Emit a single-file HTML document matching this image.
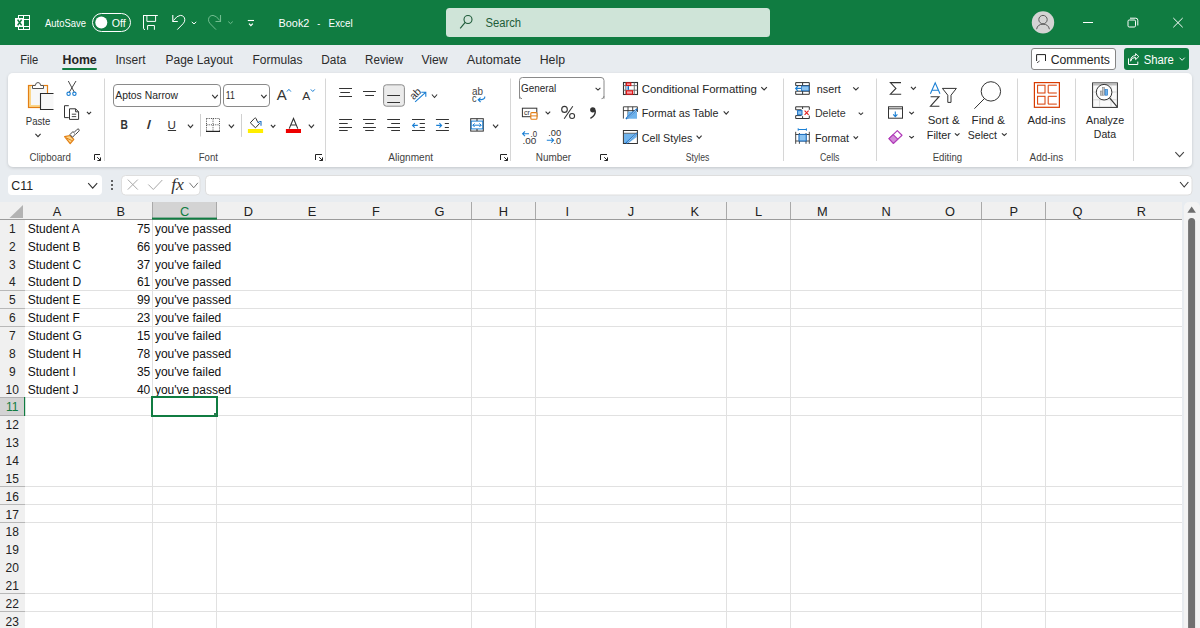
<!DOCTYPE html>
<html><head><meta charset="utf-8"><title>Book2 - Excel</title>
<style>
html,body{margin:0;padding:0;width:1200px;height:628px;overflow:hidden;background:#e8ecf0}
svg{display:block}
text{font-family:"Liberation Sans",sans-serif}
</style></head><body>
<svg width="1200" height="628" viewBox="0 0 1200 628">
<rect x="0" y="0" width="1200" height="628" fill="#e8ecf0"/>
<rect x="0" y="0" width="1200" height="45" fill="#107c41"/>
<rect x="18" y="15" width="12" height="15" fill="#fff"/>
<g fill="#107c41"><rect x="19" y="16" width="4" height="2"/><rect x="24" y="16" width="5" height="3"/><rect x="24" y="20" width="5" height="6"/><rect x="19" y="27" width="4" height="2"/><rect x="24" y="27" width="5" height="2"/></g>
<rect x="15" y="18" width="8" height="9" fill="#fff"/>
<path d="M17.6 19.6 L21.6 25.4 M21.6 19.6 L17.6 25.4" stroke="#107c41" stroke-width="1.6"/>
<text x="45" y="27" font-size="10.5" fill="#fff" textLength="41" lengthAdjust="spacingAndGlyphs" >AutoSave</text>
<rect x="92.5" y="13.5" width="38" height="18" rx="9" fill="none" stroke="#fff" stroke-width="1"/>
<circle cx="101.3" cy="22.6" r="6" fill="#fff"/>
<text x="111.8" y="27" font-size="10.5" fill="#fff" textLength="14" lengthAdjust="spacingAndGlyphs" >Off</text>
<path d="M143 15.5 H157.8 M143.5 15.5 V28.2 Q143.5 29.6 145 29.6" fill="none" stroke="#fff" stroke-width="1"/>
<path d="M146.9 15.5 V21.4 H155.6 V15.5 M147.6 29.8 V25.5 H154.4 V29.8" fill="none" stroke="#fff" stroke-width="1"/>
<path d="M173.4 20.6 Q177 15.5 180.3 15.4 Q184.6 15.5 184.8 19.8 Q184.9 21.8 183 23.8 L177.3 29.6" fill="none" stroke="#fff" stroke-width="1"/>
<path d="M172.8 15 V21.5 H177.8" fill="none" stroke="#fff" stroke-width="1.1"/>
<path d="M191.75 21.9 L194 23.9 L196.25 21.9" fill="none" stroke="#fff" stroke-width="1"/>
<path d="M219.9 20.6 Q216.3 15.5 213 15.4 Q208.7 15.5 208.5 19.8 Q208.4 21.8 210.3 23.8 L216 29.6" fill="none" stroke="#72bd90" stroke-width="1"/>
<path d="M220.5 15 V21.5 H215.5" fill="none" stroke="#72bd90" stroke-width="1.1"/>
<path d="M228.25 21.6 L230.5 23.6 L232.75 21.6" fill="none" stroke="#72bd90" stroke-width="1"/>
<line x1="247.8" y1="20.5" x2="254" y2="20.5" stroke="#fff" stroke-width="1.1"/>
<path d="M249 23.6 L250.9 25.6 L252.8 23.6" fill="none" stroke="#fff" stroke-width="1.3"/>
<text x="278.6" y="27" font-size="11" fill="#fff" textLength="30.8" lengthAdjust="spacingAndGlyphs" >Book2</text>
<text x="317.3" y="27" font-size="11" fill="#fff" textLength="3" lengthAdjust="spacingAndGlyphs" >-</text>
<text x="328.6" y="27" font-size="11" fill="#fff" textLength="24.1" lengthAdjust="spacingAndGlyphs" >Excel</text>
<rect x="446" y="8" width="324" height="29" rx="3.5" fill="#cfe4d8"/>
<circle cx="468" cy="19.5" r="4" fill="none" stroke="#1d5a38" stroke-width="1.1"/>
<line x1="465.2" y1="22.3" x2="460.2" y2="28.3" stroke="#1d5a38" stroke-width="1.1"/>
<text x="485.5" y="27" font-size="12" fill="#1e5c38" textLength="35.6" lengthAdjust="spacingAndGlyphs" >Search</text>
<circle cx="1043" cy="22.4" r="11.2" fill="#d4d4d4"/>
<circle cx="1043" cy="19.6" r="4.2" fill="none" stroke="#5c5c5c" stroke-width="1"/>
<path d="M1036.6 29.2 Q1037.5 24.2 1043 24.2 Q1048.5 24.2 1049.4 29.2" fill="none" stroke="#5c5c5c" stroke-width="1"/>
<line x1="1083" y1="22.5" x2="1093" y2="22.5" stroke="#fff" stroke-width="1"/>
<rect x="1128" y="20" width="7.5" height="7" rx="1.2" fill="none" stroke="#fff" stroke-width="1"/>
<path d="M1130 18.2 H1135.8 Q1137.8 18.2 1137.8 20.2 V25.5" fill="none" stroke="#fff" stroke-width="1"/>
<path d="M1173.3 18 L1182.7 27.3 M1182.7 18 L1173.3 27.3" stroke="#fff" stroke-width="1"/>
<text x="20.3" y="63.8" font-size="12" fill="#2b2b2b" textLength="18" lengthAdjust="spacingAndGlyphs" >File</text>
<text x="62.5" y="63.8" font-size="12" fill="#242424" textLength="34.2" lengthAdjust="spacingAndGlyphs" font-weight="bold" >Home</text>
<text x="115.5" y="63.8" font-size="12" fill="#2b2b2b" textLength="30" lengthAdjust="spacingAndGlyphs" >Insert</text>
<text x="165.5" y="63.8" font-size="12" fill="#2b2b2b" textLength="67.3" lengthAdjust="spacingAndGlyphs" >Page Layout</text>
<text x="252.5" y="63.8" font-size="12" fill="#2b2b2b" textLength="50" lengthAdjust="spacingAndGlyphs" >Formulas</text>
<text x="321.3" y="63.8" font-size="12" fill="#2b2b2b" textLength="25" lengthAdjust="spacingAndGlyphs" >Data</text>
<text x="365.1" y="63.8" font-size="12" fill="#2b2b2b" textLength="38" lengthAdjust="spacingAndGlyphs" >Review</text>
<text x="421.4" y="63.8" font-size="12" fill="#2b2b2b" textLength="26.2" lengthAdjust="spacingAndGlyphs" >View</text>
<text x="466.7" y="63.8" font-size="12" fill="#2b2b2b" textLength="54.3" lengthAdjust="spacingAndGlyphs" >Automate</text>
<text x="539.7" y="63.8" font-size="12" fill="#2b2b2b" textLength="25.3" lengthAdjust="spacingAndGlyphs" >Help</text>
<rect x="62" y="68" width="35" height="2" rx="1" fill="#107c41"/>
<rect x="1031.5" y="48.5" width="84" height="21" rx="2.5" fill="#fff" stroke="#858585" stroke-width="1"/>
<path d="M1036.6 61 V54.6 H1045.5 V61" fill="none" stroke="#222" stroke-width="1"/>
<path d="M1037 62.8 L1039.6 61" fill="none" stroke="#555" stroke-width="1"/>
<text x="1050.7" y="63.8" font-size="12" fill="#242424" textLength="59.3" lengthAdjust="spacingAndGlyphs" >Comments</text>
<rect x="1124" y="48" width="65" height="22" rx="3" fill="#107c41"/>
<path d="M1128.5 58.4 V64.5 H1137.8 V61.6" fill="none" stroke="#fff" stroke-width="1"/>
<path d="M1130.6 61.2 Q1131.2 57.4 1135.6 57.4 V59.6 L1138.8 56.6 L1135.6 53.6 V55.6 Q1130.6 55.8 1130.6 61.2 Z" fill="none" stroke="#fff" stroke-width="1" stroke-linejoin="round"/>
<text x="1143.7" y="63.8" font-size="12" fill="#fff" textLength="30" lengthAdjust="spacingAndGlyphs" >Share</text>
<path d="M1179.5 57.7 L1182.1 60.3 L1184.6999999999998 57.7" fill="none" stroke="#fff" stroke-width="1"/>
<defs><filter id="sh" x="-5%" y="-20%" width="110%" height="150%"><feDropShadow dx="0" dy="1" stdDeviation="1.4" flood-color="#000" flood-opacity="0.16"/></filter></defs>
<rect x="8" y="73" width="1184" height="94" rx="5" fill="#ffffff" filter="url(#sh)"/>
<line x1="104.5" y1="78.5" x2="104.5" y2="161" stroke="#d6d6d6" stroke-width="1"/>
<line x1="325.5" y1="78.5" x2="325.5" y2="161" stroke="#d6d6d6" stroke-width="1"/>
<line x1="510.5" y1="78.5" x2="510.5" y2="161" stroke="#d6d6d6" stroke-width="1"/>
<line x1="783.5" y1="78.5" x2="783.5" y2="161" stroke="#d6d6d6" stroke-width="1"/>
<line x1="876.5" y1="78.5" x2="876.5" y2="161" stroke="#d6d6d6" stroke-width="1"/>
<line x1="1017.5" y1="78.5" x2="1017.5" y2="161" stroke="#d6d6d6" stroke-width="1"/>
<line x1="1075.5" y1="78.5" x2="1075.5" y2="161" stroke="#d6d6d6" stroke-width="1"/>
<line x1="1133.5" y1="78.5" x2="1133.5" y2="161" stroke="#d6d6d6" stroke-width="1"/>
<text x="29.5" y="160.8" font-size="10" fill="#424242" textLength="41.4" lengthAdjust="spacingAndGlyphs" >Clipboard</text>
<text x="198.7" y="160.8" font-size="10" fill="#424242" textLength="19.2" lengthAdjust="spacingAndGlyphs" >Font</text>
<text x="388.3" y="160.8" font-size="10" fill="#424242" textLength="44.8" lengthAdjust="spacingAndGlyphs" >Alignment</text>
<text x="535.8" y="160.8" font-size="10" fill="#424242" textLength="35.4" lengthAdjust="spacingAndGlyphs" >Number</text>
<text x="685.75" y="160.8" font-size="10" fill="#424242" textLength="23.5" lengthAdjust="spacingAndGlyphs" >Styles</text>
<text x="820" y="160.8" font-size="10" fill="#424242" textLength="19.5" lengthAdjust="spacingAndGlyphs" >Cells</text>
<text x="932.7" y="160.8" font-size="10" fill="#424242" textLength="29.4" lengthAdjust="spacingAndGlyphs" >Editing</text>
<text x="1029.5" y="160.8" font-size="10" fill="#424242" textLength="33.8" lengthAdjust="spacingAndGlyphs" >Add-ins</text>
<path d="M94.5 160 V154.5 H100" fill="none" stroke="#222" stroke-width="1"/>
<path d="M97.2 157.2 L100.5 160.5 M100.5 157.4 V160.5 H97.4" fill="none" stroke="#222" stroke-width="1"/>
<path d="M315.5 160 V154.5 H322" fill="none" stroke="#222" stroke-width="1"/>
<path d="M319.2 157.2 L322.5 160.5 M322.5 157.4 V160.5 H319.4" fill="none" stroke="#222" stroke-width="1"/>
<path d="M500.5 160 V154.5 H507" fill="none" stroke="#222" stroke-width="1"/>
<path d="M504.2 157.2 L507.5 160.5 M507.5 157.4 V160.5 H504.4" fill="none" stroke="#222" stroke-width="1"/>
<path d="M600.5 160 V154.5 H607" fill="none" stroke="#222" stroke-width="1"/>
<path d="M604.2 157.2 L607.5 160.5 M607.5 157.4 V160.5 H604.4" fill="none" stroke="#222" stroke-width="1"/>
<path d="M1175.35 152.15 L1179.6 156.65 L1183.85 152.15" fill="none" stroke="#444" stroke-width="1.1"/>
<rect x="8" y="175" width="94" height="20" rx="4" fill="#fff"/>
<text x="11.3" y="189.7" font-size="12" fill="#242424" textLength="21.7" lengthAdjust="spacingAndGlyphs" >C11</text>
<path d="M88.2 183.2 L92.7 188.2 L97.2 183.2" fill="none" stroke="#333" stroke-width="1.1"/>
<circle cx="112" cy="181" r="1" fill="#333"/>
<circle cx="112" cy="185" r="1" fill="#333"/>
<circle cx="112" cy="189" r="1" fill="#333"/>
<rect x="121.5" y="175.5" width="78.5" height="19.5" rx="4" fill="#fff" stroke="#dedede" stroke-width="1"/>
<path d="M127.8 179.6 L137.8 189.6 M137.8 179.6 L127.8 189.6" stroke="#a8a8a8" stroke-width="1"/>
<path d="M148.3 184.5 L153.3 189.5 L162.3 180" fill="none" stroke="#a8a8a8" stroke-width="1"/>
<text x="171.2" y="190" font-size="16.5" fill="#333" textLength="12.8" lengthAdjust="spacingAndGlyphs" font-style="italic" style="font-family:'Liberation Serif'" >fx</text>
<path d="M189.45 182.8 L193.7 187.8 L197.95 182.8" fill="none" stroke="#777" stroke-width="1"/>
<rect x="205.5" y="175.5" width="986.5" height="19.5" rx="4" fill="#fff" stroke="#dedede" stroke-width="1"/>
<path d="M1180.05 182.0 L1184.2 187.0 L1188.3500000000001 182.0" fill="none" stroke="#333" stroke-width="1.1"/>
<rect x="0" y="202" width="1182" height="17" fill="#f0f0f0"/>
<rect x="0" y="219" width="25" height="409" fill="#f0f0f0"/>
<rect x="25" y="220" width="1157" height="408" fill="#ffffff"/>
<rect x="152" y="202" width="65" height="17" fill="#d3d3d3"/>
<rect x="152" y="202" width="1" height="17" fill="#a9a9a9"/>
<rect x="216" y="202" width="1" height="17" fill="#a9a9a9"/>
<rect x="471" y="202" width="1" height="17" fill="#a9a9a9"/>
<rect x="535" y="202" width="1" height="17" fill="#a9a9a9"/>
<rect x="726" y="202" width="1" height="17" fill="#a9a9a9"/>
<rect x="790" y="202" width="1" height="17" fill="#a9a9a9"/>
<rect x="981" y="202" width="1" height="17" fill="#a9a9a9"/>
<rect x="1045" y="202" width="1" height="17" fill="#a9a9a9"/>
<rect x="0" y="219" width="1182" height="1" fill="#9b9b9b"/>
<rect x="152" y="217.6" width="65" height="2" fill="#107c41"/>
<polygon points="23,205 23,218 9.5,218" fill="#b3b3b3"/>
<rect x="152" y="220" width="1" height="408" fill="#e1e1e1"/>
<rect x="471" y="220" width="1" height="408" fill="#e1e1e1"/>
<rect x="535" y="220" width="1" height="408" fill="#e1e1e1"/>
<rect x="726" y="220" width="1" height="408" fill="#e1e1e1"/>
<rect x="790" y="220" width="1" height="408" fill="#e1e1e1"/>
<rect x="981" y="220" width="1" height="408" fill="#e1e1e1"/>
<rect x="1045" y="220" width="1" height="408" fill="#e1e1e1"/>
<rect x="216" y="397" width="1" height="231" fill="#e1e1e1"/>
<rect x="25" y="290" width="1157" height="1" fill="#e1e1e1"/>
<rect x="0" y="290" width="25" height="1" fill="#b8b8b8"/>
<rect x="25" y="308" width="1157" height="1" fill="#e1e1e1"/>
<rect x="0" y="308" width="25" height="1" fill="#b8b8b8"/>
<rect x="25" y="326" width="1157" height="1" fill="#e1e1e1"/>
<rect x="0" y="326" width="25" height="1" fill="#b8b8b8"/>
<rect x="25" y="397" width="1157" height="1" fill="#e1e1e1"/>
<rect x="0" y="397" width="25" height="1" fill="#b8b8b8"/>
<rect x="25" y="415" width="1157" height="1" fill="#e1e1e1"/>
<rect x="0" y="415" width="25" height="1" fill="#b8b8b8"/>
<rect x="25" y="486" width="1157" height="1" fill="#e1e1e1"/>
<rect x="0" y="486" width="25" height="1" fill="#b8b8b8"/>
<rect x="25" y="504" width="1157" height="1" fill="#e1e1e1"/>
<rect x="0" y="504" width="25" height="1" fill="#b8b8b8"/>
<rect x="25" y="522" width="1157" height="1" fill="#e1e1e1"/>
<rect x="0" y="522" width="25" height="1" fill="#b8b8b8"/>
<rect x="25" y="593" width="1157" height="1" fill="#e1e1e1"/>
<rect x="0" y="593" width="25" height="1" fill="#b8b8b8"/>
<rect x="25" y="611" width="1157" height="1" fill="#e1e1e1"/>
<rect x="0" y="611" width="25" height="1" fill="#b8b8b8"/>
<rect x="1182" y="202" width="2" height="426" fill="#e8ecf0"/>
<rect x="1184" y="202" width="16" height="440" rx="5" fill="#f3f3f3"/>
<polygon points="1187.4,212.8 1195.9,212.8 1191.65,206.4" fill="#6e6e6e"/>
<rect x="1188.1" y="218" width="7" height="430" rx="3.5" fill="#707070"/>
<text x="56.9" y="216.1" font-size="12.8" fill="#222" text-anchor="middle" >A</text>
<text x="120.7" y="216.1" font-size="12.8" fill="#222" text-anchor="middle" >B</text>
<text x="184.5" y="216.1" font-size="12.8" fill="#107c41" text-anchor="middle" >C</text>
<text x="248.3" y="216.1" font-size="12.8" fill="#222" text-anchor="middle" >D</text>
<text x="312.1" y="216.1" font-size="12.8" fill="#222" text-anchor="middle" >E</text>
<text x="375.8" y="216.1" font-size="12.8" fill="#222" text-anchor="middle" >F</text>
<text x="439.6" y="216.1" font-size="12.8" fill="#222" text-anchor="middle" >G</text>
<text x="503.4" y="216.1" font-size="12.8" fill="#222" text-anchor="middle" >H</text>
<text x="567.2" y="216.1" font-size="12.8" fill="#222" text-anchor="middle" >I</text>
<text x="631.0" y="216.1" font-size="12.8" fill="#222" text-anchor="middle" >J</text>
<text x="694.8" y="216.1" font-size="12.8" fill="#222" text-anchor="middle" >K</text>
<text x="758.6" y="216.1" font-size="12.8" fill="#222" text-anchor="middle" >L</text>
<text x="822.4" y="216.1" font-size="12.8" fill="#222" text-anchor="middle" >M</text>
<text x="886.2" y="216.1" font-size="12.8" fill="#222" text-anchor="middle" >N</text>
<text x="950.0" y="216.1" font-size="12.8" fill="#222" text-anchor="middle" >O</text>
<text x="1013.7" y="216.1" font-size="12.8" fill="#222" text-anchor="middle" >P</text>
<text x="1077.5" y="216.1" font-size="12.8" fill="#222" text-anchor="middle" >Q</text>
<text x="1141.3" y="216.1" font-size="12.8" fill="#222" text-anchor="middle" >R</text>
<rect x="0" y="397" width="24" height="19" fill="#d3d3d3"/>
<rect x="0" y="397" width="24" height="1" fill="#b0b0b0"/>
<rect x="0" y="415" width="24" height="1" fill="#b0b0b0"/>
<rect x="24" y="397" width="1.2" height="19" fill="#107c41"/>
<text x="12.3" y="232.9" font-size="12" fill="#222" text-anchor="middle" >1</text>
<text x="12.3" y="250.75" font-size="12" fill="#222" text-anchor="middle" >2</text>
<text x="12.3" y="268.6" font-size="12" fill="#222" text-anchor="middle" >3</text>
<text x="12.3" y="286.45" font-size="12" fill="#222" text-anchor="middle" >4</text>
<text x="12.3" y="304.3" font-size="12" fill="#222" text-anchor="middle" >5</text>
<text x="12.3" y="322.15" font-size="12" fill="#222" text-anchor="middle" >6</text>
<text x="12.3" y="340.0" font-size="12" fill="#222" text-anchor="middle" >7</text>
<text x="12.3" y="357.85" font-size="12" fill="#222" text-anchor="middle" >8</text>
<text x="12.3" y="375.7" font-size="12" fill="#222" text-anchor="middle" >9</text>
<text x="12.3" y="393.55" font-size="12" fill="#222" text-anchor="middle" >10</text>
<text x="12.3" y="411.4" font-size="12" fill="#107c41" text-anchor="middle" >11</text>
<text x="12.3" y="429.25" font-size="12" fill="#222" text-anchor="middle" >12</text>
<text x="12.3" y="447.1" font-size="12" fill="#222" text-anchor="middle" >13</text>
<text x="12.3" y="464.95" font-size="12" fill="#222" text-anchor="middle" >14</text>
<text x="12.3" y="482.8" font-size="12" fill="#222" text-anchor="middle" >15</text>
<text x="12.3" y="500.65" font-size="12" fill="#222" text-anchor="middle" >16</text>
<text x="12.3" y="518.5" font-size="12" fill="#222" text-anchor="middle" >17</text>
<text x="12.3" y="536.35" font-size="12" fill="#222" text-anchor="middle" >18</text>
<text x="12.3" y="554.2" font-size="12" fill="#222" text-anchor="middle" >19</text>
<text x="12.3" y="572.05" font-size="12" fill="#222" text-anchor="middle" >20</text>
<text x="12.3" y="589.9" font-size="12" fill="#222" text-anchor="middle" >21</text>
<text x="12.3" y="607.75" font-size="12" fill="#222" text-anchor="middle" >22</text>
<text x="12.3" y="625.6" font-size="12" fill="#222" text-anchor="middle" >23</text>
<text x="27.75" y="232.9" font-size="12" fill="#111" >Student A</text>
<text x="150.3" y="232.9" font-size="12" fill="#111" text-anchor="end" >75</text>
<text x="154.9" y="232.9" font-size="12" fill="#111" >you've passed</text>
<text x="27.75" y="250.75" font-size="12" fill="#111" >Student B</text>
<text x="150.3" y="250.75" font-size="12" fill="#111" text-anchor="end" >66</text>
<text x="154.9" y="250.75" font-size="12" fill="#111" >you've passed</text>
<text x="27.75" y="268.6" font-size="12" fill="#111" >Student C</text>
<text x="150.3" y="268.6" font-size="12" fill="#111" text-anchor="end" >37</text>
<text x="154.9" y="268.6" font-size="12" fill="#111" >you've failed</text>
<text x="27.75" y="286.45" font-size="12" fill="#111" >Student D</text>
<text x="150.3" y="286.45" font-size="12" fill="#111" text-anchor="end" >61</text>
<text x="154.9" y="286.45" font-size="12" fill="#111" >you've passed</text>
<text x="27.75" y="304.3" font-size="12" fill="#111" >Student E</text>
<text x="150.3" y="304.3" font-size="12" fill="#111" text-anchor="end" >99</text>
<text x="154.9" y="304.3" font-size="12" fill="#111" >you've passed</text>
<text x="27.75" y="322.15" font-size="12" fill="#111" >Student F</text>
<text x="150.3" y="322.15" font-size="12" fill="#111" text-anchor="end" >23</text>
<text x="154.9" y="322.15" font-size="12" fill="#111" >you've failed</text>
<text x="27.75" y="340.0" font-size="12" fill="#111" >Student G</text>
<text x="150.3" y="340.0" font-size="12" fill="#111" text-anchor="end" >15</text>
<text x="154.9" y="340.0" font-size="12" fill="#111" >you've failed</text>
<text x="27.75" y="357.85" font-size="12" fill="#111" >Student H</text>
<text x="150.3" y="357.85" font-size="12" fill="#111" text-anchor="end" >78</text>
<text x="154.9" y="357.85" font-size="12" fill="#111" >you've passed</text>
<text x="27.75" y="375.7" font-size="12" fill="#111" >Student I</text>
<text x="150.3" y="375.7" font-size="12" fill="#111" text-anchor="end" >35</text>
<text x="154.9" y="375.7" font-size="12" fill="#111" >you've failed</text>
<text x="27.75" y="393.55" font-size="12" fill="#111" >Student J</text>
<text x="150.3" y="393.55" font-size="12" fill="#111" text-anchor="end" >40</text>
<text x="154.9" y="393.55" font-size="12" fill="#111" >you've passed</text>
<g fill="#107c41"><rect x="151" y="396" width="67" height="2"/><rect x="151" y="415" width="67" height="2"/><rect x="151" y="396" width="2" height="21"/><rect x="216" y="396" width="2" height="21"/></g>
<rect x="214" y="413" width="2.5" height="2.5" fill="#2d7d52"/>
<rect x="28.5" y="85.5" width="19" height="22" fill="#fbd68a" stroke="#e37f14" stroke-width="1.2"/>
<rect x="31" y="86.2" width="15.8" height="18.8" fill="#f7f7f7"/>
<path d="M32.5 88.5 V85.5 H35.3 Q35.6 82.5 38 82.5 Q40.4 82.5 40.7 85.5 H43.5 V88.5 Z" fill="#fff" stroke="#555" stroke-width="1"/>
<path d="M53.5 93.5 H40.5 V109.5 H53.5" fill="#f7f7f7" stroke="#2a2a2a" stroke-width="1.1"/>
<text x="25.8" y="124.7" font-size="10.5" fill="#333" textLength="24.5" lengthAdjust="spacingAndGlyphs" >Paste</text>
<path d="M35.4 133.95000000000002 L38 136.65 L40.6 133.95000000000002" fill="none" stroke="#333" stroke-width="1.1"/>
<path d="M68.3 81 L74.2 92 M76 81 L69.4 92" fill="none" stroke="#333" stroke-width="0.9"/>
<circle cx="68.6" cy="93.8" r="1.7" fill="none" stroke="#1a7fd4" stroke-width="1.1"/>
<circle cx="74.4" cy="93.8" r="1.7" fill="none" stroke="#1a7fd4" stroke-width="1.1"/>
<path d="M68.8 105.7 H64.5 V117.6 H68.8" fill="none" stroke="#333" stroke-width="1"/>
<path d="M69.5 108.8 H75.6 L78.6 111.8 V119.4 H69.5 Z M75.6 108.8 V111.8 H78.6" fill="#fff" stroke="#333" stroke-width="1"/>
<path d="M71.8 114.2 H76.2 M71.8 116.6 H76.2" stroke="#333" stroke-width="0.9"/>
<path d="M86.9 111.9 L89 113.9 L91.1 111.9" fill="none" stroke="#333" stroke-width="1.1"/>
<path d="M64.6 136.6 L70 135.5 L73.8 139.3 L70.2 143.6 Z" fill="#fbd68a" stroke="#e37f14" stroke-width="1.2" stroke-linejoin="round"/>
<path d="M66 137.8 L71.8 140.5" stroke="#e37f14" stroke-width="1"/>
<path d="M70 134.5 L73 131.5 L75.5 134 L72.5 137.3 Z" fill="#fff" stroke="#444" stroke-width="1"/>
<path d="M74 132.5 L77.2 129.3 Q78.3 128.6 79 129.4 Q79.6 130.3 78.8 131.2 L75.7 134.3" fill="#fff" stroke="#444" stroke-width="1"/>
<rect x="113.5" y="84.5" width="107" height="22" rx="3.5" fill="#fff" stroke="#8a8a8a" stroke-width="1"/>
<text x="115.3" y="98.9" font-size="10.5" fill="#262626" textLength="62.8" lengthAdjust="spacingAndGlyphs" >Aptos Narrow</text>
<path d="M212.2 94.9 L215 98.1 L217.8 94.9" fill="none" stroke="#333" stroke-width="1.1"/>
<rect x="223.5" y="84.5" width="46" height="22" rx="3.5" fill="#fff" stroke="#8a8a8a" stroke-width="1"/>
<text x="225.8" y="99.1" font-size="10.5" fill="#262626" textLength="9" lengthAdjust="spacingAndGlyphs" >11</text>
<path d="M261.2 94.9 L263.9 97.9 L266.59999999999997 94.9" fill="none" stroke="#333" stroke-width="1.1"/>
<text x="276.7" y="99.8" font-size="15" fill="#333" textLength="10" lengthAdjust="spacingAndGlyphs" >A</text>
<path d="M286.9 91.6 L288.9 89.3 L290.9 91.6" fill="none" stroke="#1a7fd4" stroke-width="1"/>
<text x="302.3" y="99.8" font-size="11.5" fill="#333" textLength="8" lengthAdjust="spacingAndGlyphs" >A</text>
<path d="M310.8 89.4 L312.8 91.5 L314.8 89.4" fill="none" stroke="#1a7fd4" stroke-width="1"/>
<text x="120.5" y="128.8" font-size="12" fill="#333" textLength="7.4" lengthAdjust="spacingAndGlyphs" font-weight="bold" >B</text>
<text x="146.3" y="128.8" font-size="12" fill="#333" textLength="5" lengthAdjust="spacingAndGlyphs" font-style="italic" >I</text>
<text x="167.6" y="128.8" font-size="11.5" fill="#333" textLength="8.4" lengthAdjust="spacingAndGlyphs" >U</text>
<rect x="167.8" y="130" width="8.3" height="1" fill="#333"/>
<path d="M187.9 124.6 L190.5 127.6 L193.1 124.6" fill="none" stroke="#333" stroke-width="1.1"/>
<line x1="200.5" y1="114" x2="200.5" y2="136.5" stroke="#d0d0d0" stroke-width="1"/>
<g stroke="#444" stroke-width="1" stroke-dasharray="1,1.2" fill="none"><path d="M206.5 118.5 H219.5 V131 M206.5 118.5 V131 M213 118.5 V131 M206.5 124.8 H219.5"/></g>
<rect x="206" y="130.8" width="14" height="1.2" fill="#222"/>
<path d="M228.8 124.6 L231.4 127.6 L234.0 124.6" fill="none" stroke="#333" stroke-width="1.1"/>
<line x1="241.5" y1="114" x2="241.5" y2="136.9" stroke="#d0d0d0" stroke-width="1"/>
<path d="M250.3 122.8 L254.5 118.3 Q255.5 117.6 256.2 118.6 L257.2 121.3 L259.5 123.5 L255.5 127.8 Z" fill="#fff" stroke="#333" stroke-width="1" stroke-linejoin="round"/>
<path d="M257.6 122.8 Q259.5 121 261 121.6 V125.8" fill="none" stroke="#1a6fc4" stroke-width="1.1"/>
<rect x="247.9" y="129" width="15.2" height="4" fill="#ffee00"/>
<path d="M270.90000000000003 124.8 L273.1 127.39999999999999 L275.3 124.8" fill="none" stroke="#333" stroke-width="1.1"/>
<path d="M289.2 128.6 L293.5 118.5 L297.8 128.6 M290.8 125 H296.2" fill="none" stroke="#333" stroke-width="1.1"/>
<rect x="285.9" y="129" width="15.1" height="4" fill="#ee0000"/>
<path d="M308.79999999999995 124.6 L311.4 127.6 L314.0 124.6" fill="none" stroke="#333" stroke-width="1.1"/>
<rect x="339.1" y="88" width="12.899999999999977" height="1" fill="#333"/>
<rect x="340.3" y="92" width="9.599999999999966" height="1" fill="#333"/>
<rect x="339.1" y="96" width="12.899999999999977" height="1" fill="#333"/>
<rect x="363" y="91" width="12.899999999999977" height="1" fill="#333"/>
<rect x="365.2" y="95" width="8.800000000000011" height="1" fill="#333"/>
<rect x="383.6" y="84.8" width="20.8" height="21.4" rx="2.8" fill="#ebebeb" stroke="#8a8a8a" stroke-width="1"/>
<rect x="387.2" y="95" width="12.800000000000011" height="1" fill="#333"/>
<rect x="387.2" y="102" width="12.800000000000011" height="1" fill="#333"/>
<text x="0" y="0" font-size="10.5" fill="#333" transform="translate(413.8 100.2) rotate(-45)" textLength="11.5" lengthAdjust="spacingAndGlyphs">ab</text>
<path d="M415.1 101.8 L425.6 92.3 M421.3 92.2 H425.8 V96.7" fill="none" stroke="#1a7fd4" stroke-width="1.1"/>
<path d="M431.9 94.5 L434.5 97.5 L437.1 94.5" fill="none" stroke="#333" stroke-width="1.1"/>
<text x="472" y="95.4" font-size="10" fill="#444" textLength="11" lengthAdjust="spacingAndGlyphs" >ab</text>
<text x="472" y="102" font-size="10" fill="#444" textLength="4.6" lengthAdjust="spacingAndGlyphs" >c</text>
<path d="M484.8 96.5 Q485.5 99.8 478.5 99.8 M480.6 97.6 L478.2 99.8 L480.6 102" fill="none" stroke="#1a7fd4" stroke-width="1.1"/>
<rect x="339.1" y="119" width="12.899999999999977" height="1" fill="#333"/>
<rect x="339.1" y="127" width="12.899999999999977" height="1" fill="#333"/>
<rect x="339.1" y="123" width="8.600000000000023" height="1" fill="#333"/>
<rect x="339.1" y="130" width="8.600000000000023" height="1" fill="#333"/>
<rect x="363" y="119" width="12.899999999999977" height="1" fill="#333"/>
<rect x="363" y="127" width="12.899999999999977" height="1" fill="#333"/>
<rect x="365.2" y="123" width="8.599999999999966" height="1" fill="#333"/>
<rect x="365.2" y="130" width="8.599999999999966" height="1" fill="#333"/>
<rect x="387.2" y="119" width="12.800000000000011" height="1" fill="#333"/>
<rect x="387.2" y="127" width="12.800000000000011" height="1" fill="#333"/>
<rect x="391.2" y="123" width="8.800000000000011" height="1" fill="#333"/>
<rect x="391.2" y="130" width="8.800000000000011" height="1" fill="#333"/>
<rect x="412" y="119" width="12.899999999999977" height="1" fill="#333"/>
<rect x="419.7" y="123" width="5.199999999999989" height="1" fill="#333"/>
<rect x="419.7" y="127" width="5.199999999999989" height="1" fill="#333"/>
<rect x="412" y="130" width="12.899999999999977" height="1" fill="#333"/>
<path d="M417.8 125.4 H412.6 M414.8 123.2 L412.6 125.4 L414.8 127.6" fill="none" stroke="#1a7fd4" stroke-width="1.1"/>
<rect x="435.9" y="119" width="13.0" height="1" fill="#333"/>
<rect x="444.8" y="123" width="4.099999999999966" height="1" fill="#333"/>
<rect x="444.8" y="127" width="4.099999999999966" height="1" fill="#333"/>
<rect x="435.9" y="130" width="13.0" height="1" fill="#333"/>
<path d="M436.2 125.4 H441.6 M439.4 123.2 L441.6 125.4 L439.4 127.6" fill="none" stroke="#1a7fd4" stroke-width="1.1"/>
<rect x="470.7" y="118.7" width="12.6" height="12.4" fill="#fff" stroke="#333" stroke-width="1"/>
<rect x="471.2" y="121.1" width="11.6" height="7.8" fill="none" stroke="#1a7fd4" stroke-width="1"/>
<path d="M477 118.7 V121 M477 129 V131" stroke="#333" stroke-width="1"/>
<path d="M472.8 125.2 H481.2 M474.6 123.4 L472.8 125.2 L474.6 127 M479.4 123.4 L481.2 125.2 L479.4 127" fill="none" stroke="#1a7fd4" stroke-width="1"/>
<path d="M493.0 124.6 L495.6 127.6 L498.20000000000005 124.6" fill="none" stroke="#333" stroke-width="1.1"/>
<path d="M519.5 98.7 V80.5 Q519.5 77.5 522.5 77.5 H601 Q604 77.5 604 80.5 V98.7" fill="#fff" stroke="#8a8a8a" stroke-width="1"/>
<path d="M519.5 96 Q519.5 98.7 522 98.7 M604 96 Q604 98.7 601.5 98.7" fill="none" stroke="#8a8a8a" stroke-width="1"/>
<text x="521" y="91.9" font-size="10.5" fill="#262626" textLength="35.3" lengthAdjust="spacingAndGlyphs" >General</text>
<path d="M595.6 87.9 L598 90.1 L600.4 87.9" fill="none" stroke="#333" stroke-width="1.1"/>
<rect x="522.4" y="108.2" width="14.4" height="8.5" fill="#fff" stroke="#333" stroke-width="1"/>
<text x="524" y="115.2" font-size="7" fill="#333" textLength="6" lengthAdjust="spacingAndGlyphs" >cr</text>
<rect x="530.8" y="112.6" width="6.2" height="6.6" rx="1" fill="#fff" stroke="#e37f14" stroke-width="1.1"/>
<line x1="530.8" y1="115.9" x2="537" y2="115.9" stroke="#e37f14" stroke-width="1"/>
<path d="M545.6 111.7 L547.9 113.89999999999999 L550.1999999999999 111.7" fill="none" stroke="#333" stroke-width="1.1"/>
<ellipse cx="564.5" cy="109.4" rx="2.8" ry="3" fill="none" stroke="#333" stroke-width="1.1"/>
<ellipse cx="572.1" cy="116" rx="2.5" ry="2.5" fill="none" stroke="#333" stroke-width="1.1"/>
<path d="M572.8 106.3 L564.2 118.7" stroke="#333" stroke-width="1.1"/>
<path d="M592.8 109.8 m-2.7 0 a2.7 2.6 0 1 0 5.4 0 a2.7 2.6 0 1 0 -5.4 0" fill="#333"/>
<path d="M595.2 110.4 Q595.8 115.6 590.4 118.4" fill="none" stroke="#333" stroke-width="1.5"/>
<path d="M529 133.8 H522.6 M525 131.4 L522.6 133.8 L525 136.2" fill="none" stroke="#1a7fd4" stroke-width="1.1"/>
<text x="530.5" y="137" font-size="8.5" fill="#333" textLength="6.5" lengthAdjust="spacingAndGlyphs" >.0</text>
<text x="522.5" y="143.6" font-size="8.5" fill="#333" textLength="13.8" lengthAdjust="spacingAndGlyphs" >.00</text>
<text x="548.2" y="136.4" font-size="8.5" fill="#333" textLength="13" lengthAdjust="spacingAndGlyphs" >.00</text>
<path d="M546.8 140.3 H553.6 M551.2 137.9 L553.6 140.3 L551.2 142.7" fill="none" stroke="#1a7fd4" stroke-width="1.1"/>
<text x="553.5" y="143.6" font-size="8.5" fill="#333" textLength="7.6" lengthAdjust="spacingAndGlyphs" >.0</text>
<rect x="623.5" y="82.5" width="14" height="12" fill="#fff" stroke="#333" stroke-width="1.1"/>
<path d="M623.5 85.6 H637.5 M623.5 90.2 H637.5 M625.8 82.5 V94.5 M634.3 82.5 V94.5" stroke="#666" stroke-width="0.9" fill="none"/>
<rect x="626.4" y="82.9" width="4.4" height="2.6" fill="#f7a1aa" stroke="#e01010" stroke-width="1.1"/>
<rect x="626.4" y="90.8" width="6.2" height="3.4" fill="#f7a1aa" stroke="#e01010" stroke-width="1.1"/>
<rect x="626.2" y="86.2" width="1.6" height="3.6" fill="#8cc4f0"/>
<rect x="627.8" y="86.2" width="1.2" height="3.6" fill="#1565c0"/>
<text x="641.7" y="93" font-size="11.6" fill="#262626" textLength="115.2" lengthAdjust="spacingAndGlyphs" >Conditional Formatting</text>
<path d="M761.3000000000001 87.05 L764.1 89.95 L766.9 87.05" fill="none" stroke="#333" stroke-width="1.1"/>
<path d="M623.4 118.6 V106.8 H637.4 V112 M623.4 110.6 H637.4 M628 106.8 V118.6 M632.7 106.8 V112" stroke="#333" stroke-width="0.9" fill="none"/>
<path d="M628.2 111.4 H637 V118.8 H626.4 Z" fill="#6fb3ec"/>
<path d="M626 118.8 L637.2 108.8" stroke="#1a6fc4" stroke-width="1.8"/>
<path d="M627.2 118.2 L636 110" stroke="#fff" stroke-width="0.6"/>
<text x="641.7" y="116.9" font-size="11.6" fill="#262626" textLength="76.8" lengthAdjust="spacingAndGlyphs" >Format as Table</text>
<path d="M723.7 111.39999999999999 L726.2 114.2 L728.7 111.39999999999999" fill="none" stroke="#333" stroke-width="1.1"/>
<rect x="623.4" y="130.5" width="14" height="13" fill="#fff" stroke="#333" stroke-width="1"/>
<line x1="623.4" y1="133.3" x2="637.4" y2="133.3" stroke="#333" stroke-width="0.9"/>
<path d="M624 133.8 H636.8 V137 L628.6 143 H624 Z" fill="#6fb3ec"/>
<path d="M626 143.4 L637.2 133" stroke="#1a6fc4" stroke-width="1.6"/>
<path d="M627 142.8 L636.4 134" stroke="#fff" stroke-width="0.6"/>
<text x="641.7" y="141.7" font-size="11.6" fill="#262626" textLength="50.6" lengthAdjust="spacingAndGlyphs" >Cell Styles</text>
<path d="M696.6 135.6 L699.1 138.4 L701.6 135.6" fill="none" stroke="#333" stroke-width="1.1"/>
<path d="M795.7 82.6 H809.3 V94.3 H795.7 V91.2 M795.7 85.6 V82.6 M802.6 82.6 V94.3 M795.7 85.6 H809.3 M795.7 91.2 H809.3" stroke="#333" stroke-width="1" fill="none"/>
<rect x="801.6" y="86" width="7.3" height="4.8" fill="#8cc4f0" stroke="#1a6fc4" stroke-width="0.8"/>
<path d="M801 88.4 H795.6 M798 86 L795.6 88.4 L798 90.8" fill="none" stroke="#1a7fd4" stroke-width="1.1"/>
<text x="816.8" y="92.9" font-size="11.6" fill="#262626" textLength="24" lengthAdjust="spacingAndGlyphs" >nsert</text>
<path d="M853.1999999999999 87.3 L855.9 89.89999999999999 L858.6 87.3" fill="none" stroke="#333" stroke-width="1.1"/>
<path d="M795.7 109.8 V106.8 H809.3 V109.8 M795.7 115.6 V118.5 H809.3 V115.6 M795.7 109.8 H801.5 M795.7 115.6 H801.5 M802.6 106.8 V109 M802.6 116.2 V118.5" stroke="#333" stroke-width="1" fill="none"/>
<rect x="797.6" y="110.6" width="4.4" height="4.2" fill="#8cc4f0" stroke="#1a6fc4" stroke-width="1"/>
<path d="M804.6 110.6 L808.6 114.8 M808.6 110.6 L804.6 114.8" stroke="#e02020" stroke-width="1.1"/>
<text x="814.9" y="116.9" font-size="11.6" fill="#262626" textLength="30.9" lengthAdjust="spacingAndGlyphs" fill-opacity="0.95">Delete</text>
<path d="M858.6999999999999 112.6 L860.9 114.6 L863.1 112.6" fill="none" stroke="#333" stroke-width="1.1"/>
<path d="M798.2 129.5 H806.4 M798.2 128.3 V130.7 M806.4 128.3 V130.7" stroke="#1a7fd4" stroke-width="1"/>
<path d="M795.7 131.8 V143.8 M809.3 131.8 V143.8 M799.4 133 V143.8 M806 133 V143.8 M795.7 134.5 H809.3 M795.7 141 H809.3" stroke="#333" stroke-width="0.9" fill="none"/>
<rect x="799" y="134.4" width="7.2" height="6.6" fill="#8cc4f0" stroke="#1a6fc4" stroke-width="1"/>
<text x="814.9" y="141.7" font-size="11.6" fill="#262626" textLength="34.2" lengthAdjust="spacingAndGlyphs" >Format</text>
<path d="M853.5999999999999 136.45 L855.8 138.75 L858.0 136.45" fill="none" stroke="#333" stroke-width="1.1"/>
<path d="M901 82.6 H890.4 L895.9 88.4 L890.4 94.2 H901.2" fill="none" stroke="#333" stroke-width="1.1" stroke-linejoin="miter"/>
<path d="M910.9499999999999 86.9 L913.4 89.5 L915.85 86.9" fill="none" stroke="#333" stroke-width="1.1"/>
<rect x="888.5" y="106.8" width="14" height="11.4" fill="#fff" stroke="#333" stroke-width="1"/>
<line x1="888.5" y1="108.8" x2="902.5" y2="108.8" stroke="#333" stroke-width="0.9"/>
<path d="M895.3 111.4 V116.4 M893.2 114.4 L895.3 116.6 L897.4 114.4" fill="none" stroke="#1a7fd4" stroke-width="1.1"/>
<path d="M909.3000000000001 111.9 L911.6 113.9 L913.9 111.9" fill="none" stroke="#333" stroke-width="1.1"/>
<path d="M897.3 130.6 L902 135.2 L893.4 143.4 L889 138.6 Z" fill="#fff" stroke="#b03ab8" stroke-width="1.2" stroke-linejoin="round"/>
<path d="M889 138.6 L893.2 134.6 L897.8 139.2 L893.4 143.4 Z" fill="#d38ad9" stroke="#b03ab8" stroke-width="1.1" stroke-linejoin="round"/>
<path d="M909.3000000000001 136.05 L911.6 137.95 L913.9 136.05" fill="none" stroke="#333" stroke-width="1.1"/>
<path d="M930.4 93.8 L935.2 82.9 L940 93.8 M932 90.2 H938.4" fill="none" stroke="#1a7fd4" stroke-width="1.1"/>
<path d="M930.6 96.7 H939 L930.5 106.2 H939.4" fill="none" stroke="#333" stroke-width="1.1"/>
<path d="M942.4 88.4 H956.4 L951 95.2 V102.4 H947.8 V95.2 Z" fill="#fff" stroke="#333" stroke-width="1" stroke-linejoin="miter"/>
<text x="927.7" y="124" font-size="11" fill="#262626" textLength="32" lengthAdjust="spacingAndGlyphs" >Sort &amp;</text>
<text x="926.8" y="138.9" font-size="11" fill="#262626" textLength="24" lengthAdjust="spacingAndGlyphs" >Filter</text>
<path d="M954.9000000000001 133.3 L957.2 135.5 L959.5 133.3" fill="none" stroke="#333" stroke-width="1.1"/>
<circle cx="990.9" cy="91.4" r="9.7" fill="#fff" stroke="#333" stroke-width="1"/>
<line x1="984.4" y1="98.6" x2="974.4" y2="108.7" stroke="#333" stroke-width="1"/>
<text x="971.6" y="124" font-size="11" fill="#262626" textLength="33.3" lengthAdjust="spacingAndGlyphs" >Find &amp;</text>
<text x="967.8" y="138.9" font-size="11" fill="#262626" textLength="29.2" lengthAdjust="spacingAndGlyphs" >Select</text>
<path d="M1001.9 133.3 L1004.3 135.5 L1006.6999999999999 133.3" fill="none" stroke="#333" stroke-width="1.1"/>
<rect x="1034.4" y="82.6" width="25" height="24.7" fill="#fff" stroke="#d83b01" stroke-width="1.2"/>
<rect x="1037.6" y="85.2" width="7.4" height="7.8" fill="none" stroke="#d83b01" stroke-width="1"/>
<rect x="1037.6" y="96.3" width="7.4" height="7.8" fill="none" stroke="#d83b01" stroke-width="1"/>
<path d="M1056.8 85.2 H1048.2 V93 H1056.8 M1056.8 96.3 H1048.2 V104.1 H1056.8" fill="none" stroke="#d83b01" stroke-width="1"/>
<text x="1027.6" y="123.7" font-size="11" fill="#262626" textLength="38.1" lengthAdjust="spacingAndGlyphs" >Add-ins</text>
<rect x="1092.6" y="82.9" width="24.8" height="24.5" fill="#fafafa" stroke="#333" stroke-width="1"/>
<rect x="1093" y="83.3" width="24" height="2.2" fill="#bdbdbd"/>
<path d="M1093 92 H1117 M1093 99.8 H1117 M1099.6 85.5 V107 M1111 85.5 V107" stroke="#cfcfcf" stroke-width="0.8"/>
<circle cx="1104.1" cy="92.2" r="7.8" fill="#fff" stroke="#333" stroke-width="1"/>
<path d="M1109.6 97.8 L1117.2 106.8" stroke="#333" stroke-width="1.1"/>
<rect x="1100.4" y="91" width="1.8" height="4.2" fill="#c8c8c8" stroke="#777" stroke-width="0.5"/>
<rect x="1102.6" y="87.6" width="2" height="7.6" fill="#c8c8c8" stroke="#777" stroke-width="0.5"/>
<rect x="1105" y="89.4" width="2.6" height="5.8" fill="#6fb3ec" stroke="#1a6fc4" stroke-width="0.6"/>
<text x="1086" y="123.7" font-size="11" fill="#262626" textLength="38.2" lengthAdjust="spacingAndGlyphs" >Analyze</text>
<text x="1093.8" y="138.3" font-size="11" fill="#262626" textLength="22.2" lengthAdjust="spacingAndGlyphs" >Data</text>
<!--ICONS-->
</svg></body></html>
